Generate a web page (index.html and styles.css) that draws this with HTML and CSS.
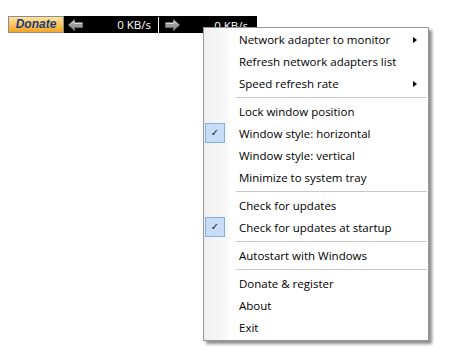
FILE: index.html
```html
<!DOCTYPE html>
<html lang="en">
<head>
    <meta charset="UTF-8">
    <title>Net Speed Monitor</title>
    <link rel="stylesheet" href="styles.css">
</head>
<body>
    <div class="bar">
        <button class="donate">Donate</button>
        <div class="meter">
            <div class="speed">
                <svg class="arrow" width="15" height="12" viewBox="0 0 15 12">
                    <polygon points="0.5,6 6.5,0.5 6.5,3.5 14.5,3.5 14.5,8.5 6.5,8.5 6.5,11.5" fill="#9a9a9a" stroke="#6f6f6f" stroke-width="1"/>
                    <polyline points="1.5,6 6,2 6,4.5 14,4.5" fill="none" stroke="#d8d8d8" stroke-width="1"/>
                </svg>
                <span class="value">0 KB/s</span>
            </div>
            <div class="speed second">
                <svg class="arrow" width="15" height="12" viewBox="0 0 15 12">
                    <polygon points="14.5,6 8.5,0.5 8.5,3.5 0.5,3.5 0.5,8.5 8.5,8.5 8.5,11.5" fill="#9a9a9a" stroke="#6f6f6f" stroke-width="1"/>
                    <polyline points="1,4.5 9,4.5 9,2 13.5,6" fill="none" stroke="#d8d8d8" stroke-width="1"/>
                </svg>
                <span class="value">0 KB/s</span>
            </div>
        </div>
    </div>

    <div class="menu">
        <div class="item sub">Network adapter to monitor</div>
        <div class="item">Refresh network adapters list</div>
        <div class="item sub">Speed refresh rate</div>
        <div class="sep"></div>
        <div class="item">Lock window position</div>
        <div class="item checked">Window style: horizontal</div>
        <div class="item">Window style: vertical</div>
        <div class="item">Minimize to system tray</div>
        <div class="sep"></div>
        <div class="item">Check for updates</div>
        <div class="item checked">Check for updates at startup</div>
        <div class="sep"></div>
        <div class="item">Autostart with Windows</div>
        <div class="sep"></div>
        <div class="item">Donate &amp; register</div>
        <div class="item">About</div>
        <div class="item">Exit</div>
    </div>
</body>
</html>
```

FILE: styles.css
```css
body {
    margin: 0;
    background: #fff;
    font-family: 'Open Sans', 'Noto Sans', sans-serif;
}
.bar {
    display: flex;
    margin: 16px 0 0 8px;
    height: 17px;
}
.donate {
    width: 56px;
    height: 17px;
    padding: 0;
    border: 1px solid #8c8c8c;
    background: linear-gradient(#fde4a0 0%, #fbc865 45%, #f5a424 100%);
    color: #1b3b78;
    font-family: 'Liberation Sans', Arial, sans-serif;
    font-weight: bold;
    font-style: italic;
    font-size: 12px;
    line-height: 15px;
}
.meter {
    display: flex;
    width: 193px;
    background: #000;
    color: #fff;
}
.speed {
    display: flex;
    align-items: center;
    width: 94px;
    padding: 0 7px 0 4px;
    box-sizing: border-box;
}
.speed.second {
    flex: 1;
    padding: 0 9px 0 6px;
    border-left: 1px solid #fff;
    margin: 1px 0 0;
}
.value {
    margin-left: auto;
    font-size: 11.5px;
    line-height: 17px;
}
.menu {
    position: absolute;
    left: 203px;
    top: 27px;
    width: 224px;
    padding: 1px 0;
    border: 1px solid #979797;
    background: #fff linear-gradient(to right, #efefef 0, #f9f9f9 24px, #fff 25px) no-repeat;
    background-size: 25px 100%;
    box-shadow: 3px 3px 3px rgba(0, 0, 0, 0.45);
    font-size: 11.5px;
    color: #000;
}
.item {
    position: relative;
    height: 22px;
    line-height: 22px;
    padding-left: 35px;
}
.sub::after {
    content: '';
    position: absolute;
    right: 11px;
    top: 8px;
    border-left: 4px solid #000;
    border-top: 3.5px solid transparent;
    border-bottom: 3.5px solid transparent;
}
.checked::before {
    content: '\2713';
    position: absolute;
    left: 1px;
    top: 0;
    width: 18px;
    height: 18px;
    border: 1px solid #86acdc;
    background: #c7ddf7;
    font-family: 'DejaVu Sans', sans-serif;
    font-weight: bold;
    font-size: 10px;
    line-height: 18px;
    text-align: center;
    color: #1a1a1a;
}
.sep {
    height: 6px;
    margin-left: 32px;
    margin-right: 1px;
    background: linear-gradient(transparent 2px, #c8c8c8 2px, #c8c8c8 3px, transparent 3px);
}
```
